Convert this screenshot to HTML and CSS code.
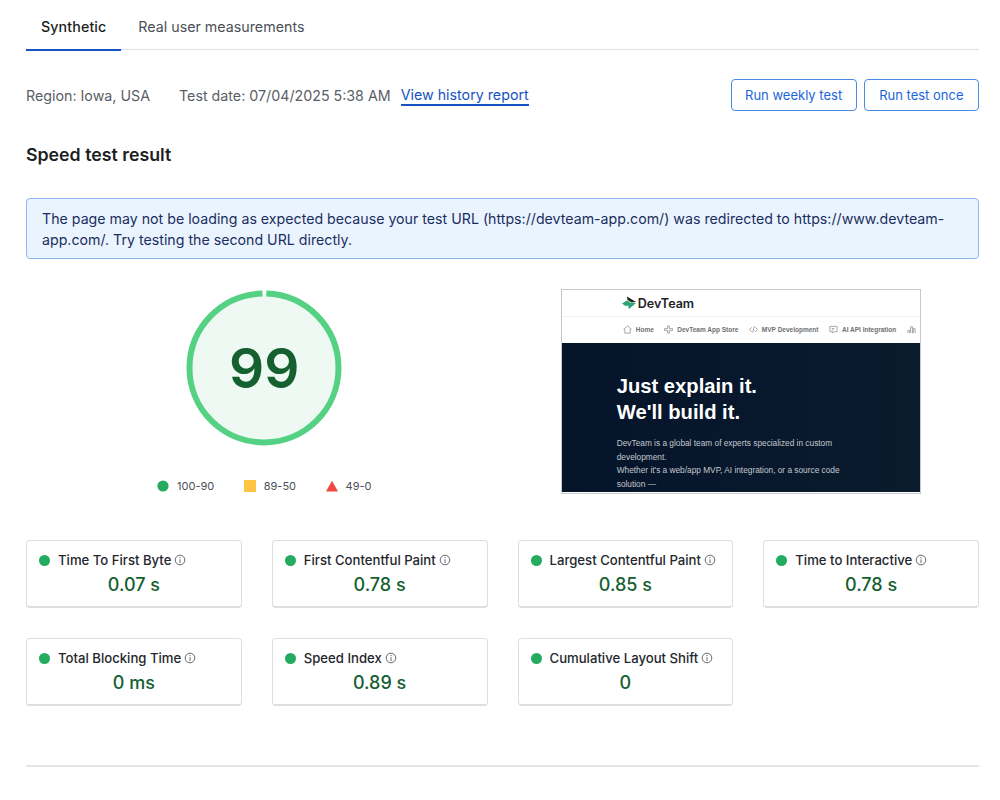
FILE: index.html
```html
<!DOCTYPE html>
<html lang="en">
<head>
    <meta charset="UTF-8">
    <meta name="viewport" content="width=device-width, initial-scale=1.0">
    <title>Speed test result</title>
    <link rel="stylesheet" href="styles.css">
</head>
<body>
    <div class="page">
        <!-- Tabs -->
        <nav class="tabs">
            <a class="tab tab-active">Synthetic</a>
            <a class="tab">Real user measurements</a>
        </nav>

        <!-- Test info -->
        <div class="meta-row">
            <div class="meta-info">
                <span class="meta-region">Region: Iowa, USA</span>
                <span class="meta-date">Test date: 07/04/2025 5:38 AM</span>
                <a class="history-link">View history report</a>
            </div>
            <div class="meta-buttons">
                <button class="run-btn">Run weekly test</button>
                <button class="run-btn">Run test once</button>
            </div>
        </div>

        <h2 class="section-title">Speed test result</h2>

        <div class="notice">The page may not be loading as expected because your test URL (https://devteam-app.com/) was redirected to https://www.devteam-app.com/. Try testing the second URL directly.</div>

        <!-- Score and preview -->
        <div class="result-row">
            <div class="score-col">
                <div class="gauge">
                    <svg width="156" height="156" viewBox="0 0 156 156">
                        <circle cx="78" cy="78" r="74" fill="#eff9f3"/>
                        <circle cx="78" cy="78" r="74.5" fill="none" stroke="#55d184" stroke-width="6" stroke-dasharray="463.4 4.7" stroke-dashoffset="-2.35" transform="rotate(-90 78 78)"/>
                    </svg>
                    <span class="gauge-score">99</span>
                </div>
                <ul class="legend">
                    <li class="legend-item">
                        <svg width="12" height="12" viewBox="0 0 12 12"><circle cx="6" cy="6" r="5.6" fill="#25ab60"/></svg>
                        100-90
                    </li>
                    <li class="legend-item">
                        <svg width="12" height="12" viewBox="0 0 12 12"><rect width="12" height="12" fill="#fdc544"/></svg>
                        89-50
                    </li>
                    <li class="legend-item">
                        <svg width="12" height="12" viewBox="0 0 12 12"><path d="M6 .8 12 11.5H0z" fill="#f0483e"/></svg>
                        49-0
                    </li>
                </ul>
            </div>

            <div class="preview-col">
                <div class="preview">
                    <div class="preview-brand">
                        <svg width="15" height="14" viewBox="0 0 15 14">
                            <path d="M5 .5 14 6 9.500 6.500 5.500 4z" fill="#17271f"/>
                            <path d="M0 7.500 5 4.500 9 7H14L7 13 6 9.500 3.500 10z" fill="#2ca577"/>
                        </svg>
                        <span>DevTeam</span>
                    </div>
                    <div class="preview-nav">
                        <span class="preview-nav-item">
                            <svg width="9" height="9" viewBox="0 0 10 10"><path d="M.5 5 5 1l4.500 4M2 4.500V9h6V4.500" fill="none" stroke="#777" stroke-width=".7"/></svg>
                            Home
                        </span>
                        <span class="preview-nav-item">
                            <svg width="9" height="9" viewBox="0 0 10 10"><path d="M4 1h2v3h3.500v2H6v3H4V6H.5V4H4z" fill="none" stroke="#777" stroke-width=".7"/></svg>
                            DevTeam App Store
                        </span>
                        <span class="preview-nav-item">
                            <svg width="9" height="9" viewBox="0 0 10 10"><path d="M3 2.500.5 5 3 7.500M7 2.500 9.500 5 7 7.500M6 1.500 4 8.500" fill="none" stroke="#777" stroke-width=".7"/></svg>
                            MVP Development
                        </span>
                        <span class="preview-nav-item">
                            <svg width="9" height="9" viewBox="0 0 10 10"><path d="M1 1.500h8v6H5.500L4 9V7.500H1zM3 4h3M3 5.500h2" fill="none" stroke="#777" stroke-width=".7"/></svg>
                            AI API Integration
                        </span>
                        <span class="preview-nav-item">
                            <svg width="9" height="9" viewBox="0 0 10 10"><path d="M1 9V6h2v3M4 9V2h2v7M7 9V4h2v5" fill="none" stroke="#777" stroke-width=".7"/></svg>
                        </span>
                    </div>
                    <div class="preview-hero">
                        <div class="preview-headline">Just explain it.<br>We'll build it.</div>
                        <p class="preview-text">DevTeam is a global team of experts specialized in custom development.<br>Whether it's a web/app MVP, AI integration, or a source code solution —</p>
                    </div>
                </div>
            </div>
        </div>

        <!-- Metrics -->
        <div class="metrics">
            <div class="metric-card">
                <div class="metric-label"><i class="dot"></i>Time To First Byte<svg class="info" viewBox="0 0 12 12"><circle cx="6" cy="6" r="4.800"/><path d="M6 5.300V9M6 3v1.200"/></svg></div>
                <div class="metric-value">0.07 s</div>
            </div>
            <div class="metric-card">
                <div class="metric-label"><i class="dot"></i>First Contentful Paint<svg class="info" viewBox="0 0 12 12"><circle cx="6" cy="6" r="4.800"/><path d="M6 5.300V9M6 3v1.200"/></svg></div>
                <div class="metric-value">0.78 s</div>
            </div>
            <div class="metric-card">
                <div class="metric-label"><i class="dot"></i>Largest Contentful Paint<svg class="info" viewBox="0 0 12 12"><circle cx="6" cy="6" r="4.800"/><path d="M6 5.300V9M6 3v1.200"/></svg></div>
                <div class="metric-value">0.85 s</div>
            </div>
            <div class="metric-card">
                <div class="metric-label"><i class="dot"></i>Time to Interactive<svg class="info" viewBox="0 0 12 12"><circle cx="6" cy="6" r="4.800"/><path d="M6 5.300V9M6 3v1.200"/></svg></div>
                <div class="metric-value">0.78 s</div>
            </div>
            <div class="metric-card">
                <div class="metric-label"><i class="dot"></i>Total Blocking Time<svg class="info" viewBox="0 0 12 12"><circle cx="6" cy="6" r="4.800"/><path d="M6 5.300V9M6 3v1.200"/></svg></div>
                <div class="metric-value">0 ms</div>
            </div>
            <div class="metric-card">
                <div class="metric-label"><i class="dot"></i>Speed Index<svg class="info" viewBox="0 0 12 12"><circle cx="6" cy="6" r="4.800"/><path d="M6 5.300V9M6 3v1.200"/></svg></div>
                <div class="metric-value">0.89 s</div>
            </div>
            <div class="metric-card">
                <div class="metric-label"><i class="dot"></i>Cumulative Layout Shift<svg class="info" viewBox="0 0 12 12"><circle cx="6" cy="6" r="4.800"/><path d="M6 5.300V9M6 3v1.200"/></svg></div>
                <div class="metric-value">0</div>
            </div>
        </div>

        <hr class="bottom-rule">
    </div>
</body>
</html>
```

FILE: styles.css
```css
/* General Styling */
body {
    font-family: 'Inter', 'Liberation Sans', sans-serif;
    background-color: #fff;
    color: #1d1f24;
    margin: 0;
    padding: 0;
}

.page {
    padding: 6px 21px 0 26px;
}

/* Tabs */
.tabs {
    display: flex;
    gap: 2px;
    height: 43px;
    border-bottom: 1px solid #dcdfe4;
}

.tab {
    padding: 12px 15px 0;
    font-size: 14.25px;
    line-height: 18px;
    color: #4b4f57;
}

.tab-active {
    height: 31px;
    font-weight: 500;
    letter-spacing: 0.1px;
    color: #1d1f24;
    border-bottom: 2px solid #1554c0;
}

/* Test info */
.meta-row {
    display: flex;
    justify-content: space-between;
    align-items: center;
    margin-top: 29px;
}

.meta-info {
    display: flex;
    align-items: center;
    font-size: 14.25px;
    color: #5a5e66;
}

.meta-region {
    margin-right: 29px;
}

.meta-date {
    margin-right: 10px;
}

.history-link {
    color: #1554c0;
    border-bottom: 2px solid #1554c0;
    line-height: 19px;
}

.meta-buttons {
    display: flex;
    gap: 7px;
}

.run-btn {
    height: 32px;
    padding: 0 13.5px;
    font-family: inherit;
    font-size: 13px;
    color: #1a66d9;
    background-color: #fff;
    border: 1.5px solid #4a8be6;
    border-radius: 4px;
}

.run-btn + .run-btn {
    padding: 0 14.5px;
}

.section-title {
    margin: 32px 0 0;
    font-size: 17.75px;
    line-height: 24px;
    font-weight: 600;
}

/* Notice */
.notice {
    margin-top: 31px;
    padding: 9px 15px 8px;
    font-size: 14.2px;
    line-height: 21px;
    color: #1a2e5e;
    background-color: #eaf4fe;
    border: 1px solid #8fb7ee;
    border-radius: 4px;
}

/* Score and preview */
.result-row {
    display: grid;
    grid-template-columns: 1fr 1fr;
    margin-top: 30px;
}

.score-col {
    display: flex;
    flex-direction: column;
    align-items: center;
}

.gauge {
    position: relative;
    width: 156px;
    height: 156px;
    margin-top: 1px;
}

.gauge-score {
    position: absolute;
    inset: 0;
    display: flex;
    align-items: center;
    justify-content: center;
    font-size: 55px;
    font-weight: 600;
    color: #14602f;
}

.legend {
    display: flex;
    gap: 29.5px;
    list-style: none;
    margin: 32px 0 0;
    padding: 0;
}

.legend-item {
    display: flex;
    align-items: center;
    gap: 8px;
    font-size: 11px;
    line-height: 16px;
    color: #4b4f57;
}

/* Site preview */
.preview-col {
    display: flex;
    justify-content: center;
}

.preview {
    width: 358px;
    height: 203px;
    overflow: hidden;
    border: 1px solid #c6c8cb;
    background-color: #fff;
    font-family: 'Liberation Sans', sans-serif;
}

.preview-brand {
    display: flex;
    align-items: center;
    gap: 1px;
    height: 26px;
    padding-left: 60px;
    font-family: 'Inter', sans-serif;
    font-size: 12.5px;
    font-weight: 600;
    color: #1d2125;
    border-bottom: 1px solid #f2f2f2;
}

.preview-nav {
    display: flex;
    gap: 10.5px;
    height: 24px;
    padding-bottom: 2px;
    align-items: center;
    padding-left: 61px;
    overflow: hidden;
}

.preview-nav-item {
    display: flex;
    align-items: center;
    gap: 4px;
    flex-shrink: 0;
    font-size: 6.500px;
    font-weight: 700;
    color: #707070;
}

.preview-hero {
    height: 149px;
    padding: 30px 0 0 55px;
    box-sizing: border-box;
    background: linear-gradient(90deg, #051429, #0b1b2e);
}

.preview-headline {
    font-size: 20.2px;
    line-height: 26px;
    font-weight: 700;
    color: #fff;
}

.preview-text {
    width: 235px;
    margin: 12px 0 0;
    font-size: 8.3px;
    line-height: 13.500px;
    color: #c3c8cf;
}

/* Metrics */
.metrics {
    display: grid;
    grid-template-columns: repeat(4, 1fr);
    gap: 30px;
    margin-top: 46px;
}

.metric-card {
    height: 68px;
    box-sizing: border-box;
    padding-top: 10px;
    border: 1px solid #dcdee2;
    border-bottom-width: 2px;
    border-radius: 4px;
}

.metric-label {
    display: flex;
    align-items: center;
    padding-left: 12px;
    font-size: 13.15px;
    line-height: 18px;
    font-weight: 500;
    color: #25272c;
}

.dot {
    width: 11px;
    height: 11px;
    margin-right: 8px;
    border-radius: 50%;
    background-color: #25ab60;
}

.info {
    width: 12px;
    height: 12px;
    margin-left: 3px;
    fill: none;
    stroke: #55585e;
    stroke-width: 0.9;
}

.metric-value {
    margin-top: 4px;
    text-align: center;
    font-size: 18px;
    line-height: 24px;
    font-weight: 500;
    color: #14602f;
}

.bottom-rule {
    margin: 59px 0 0;
    border: 0;
    border-top: 2px solid #e3e5e8;
}
```
